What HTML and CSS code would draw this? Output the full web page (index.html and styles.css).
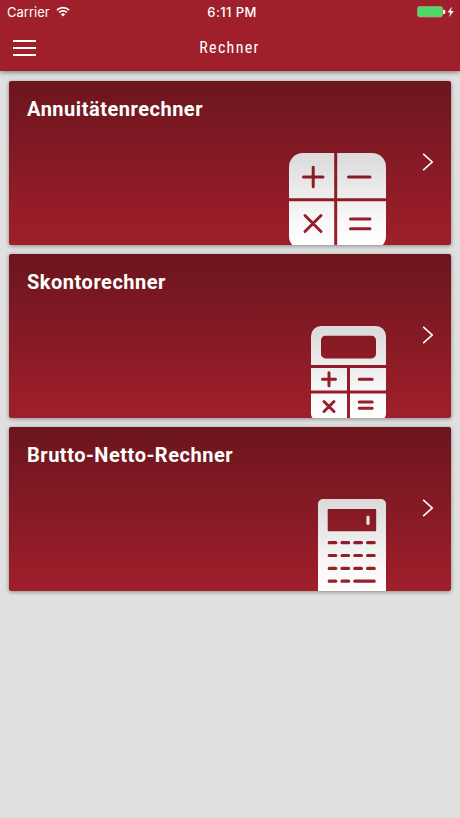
FILE: index.html
```html
<!DOCTYPE html>
<html lang="de">
<head>
    <meta charset="UTF-8">
    <title>Rechner</title>
    <link rel="stylesheet" href="styles.css">
</head>
<body>

<header class="header">
    <div class="status-bar">
        <div class="carrier">
            <span>Carrier</span>
            <svg class="wifi" width="14" height="11" viewBox="0 0 14 11">
                <path d="M0.9 4.1a8.6 8.6 0 0 1 12.2 0M3.1 6.4a5.5 5.5 0 0 1 7.8 0" fill="none" stroke="#fff" stroke-width="1.7"/>
                <path d="M7 10.6L4.8 8.3a3.1 3.1 0 0 1 4.4 0z" fill="#fff"/>
            </svg>
        </div>
        <div class="time">6:11 PM</div>
        <div class="battery">
            <svg width="38" height="12" viewBox="0 0 38 12">
                <rect x="0.5" y="0.5" width="25" height="10.4" rx="1.8" fill="#4cd964" stroke="#a99a7c" stroke-width="0.8"/>
                <path d="M26.2 3.6a2.3 2.3 0 0 1 0 4.6z" fill="#fff"/>
                <path d="M35 0.6l-4.4 5.8h2.7l-1.3 4.9 4.7-6.2h-2.8z" fill="#fff"/>
            </svg>
        </div>
    </div>
    <div class="nav-bar">
        <button class="menu" aria-label="Menü"><span></span><span></span><span></span></button>
        <h1>Rechner</h1>
    </div>
</header>

<main class="cards">
    <a class="card" href="#">
        <h2>Annuitätenrechner</h2>
        <svg class="icon" width="97" height="92" viewBox="0 0 97 92">
            <defs>
                <linearGradient id="shade" x1="0" y1="0" x2="0" y2="1">
                    <stop offset="0" stop-color="#dadada"/>
                    <stop offset="0.75" stop-color="#f9f9f9"/>
                    <stop offset="1" stop-color="#fff"/>
                </linearGradient>
                <mask id="cut1">
                    <rect width="97" height="97" rx="14" fill="#fff"/>
                    <g fill="none" stroke="#000" stroke-width="3" stroke-linecap="round">
                        <path d="M46.7 -2V99M-2 46.7H99"/>
                        <path d="M14.5 24H34M24.2 14.2V33.8M59.5 24H81"/>
                        <path d="M16 62.5L32 78.5M32 62.5L16 78.5M61.5 66H81M61.5 75.8H81"/>
                    </g>
                </mask>
            </defs>
            <rect width="97" height="92" fill="url(#shade)" mask="url(#cut1)"/>
        </svg>
        <svg class="arrow" width="12" height="18" viewBox="0 0 12 18">
            <path d="M1.2 0.8L10.2 9L1.2 17.2"/>
        </svg>
    </a>

    <a class="card" href="#">
        <h2>Skontorechner</h2>
        <svg class="icon" width="75" height="92" viewBox="0 0 75 92">
            <mask id="cut2">
                <path d="M10 0H65a10 10 0 0 1 10 10V88a6 6 0 0 1-6 6H6a6 6 0 0 1-6-6V10A10 10 0 0 1 10 0z" fill="#fff"/>
                <rect x="10" y="9.8" width="55" height="22.6" rx="4.5" fill="#000"/>
                <g fill="none" stroke="#000" stroke-width="3">
                    <path d="M-2 40.6H77M-2 66H77M37.5 40V94"/>
                    <g stroke-linecap="round">
                        <path d="M11.5 53.2H24.5M18 46.7V59.7M48.2 53.2H61.2"/>
                        <path d="M13 75.5L23 85.5M23 75.5L13 85.5M48.2 76H61.2M48.2 82.3H61.2"/>
                    </g>
                </g>
            </mask>
            <rect width="75" height="92" fill="url(#shade)" mask="url(#cut2)"/>
        </svg>
        <svg class="arrow" width="12" height="18" viewBox="0 0 12 18">
            <path d="M1.2 0.8L10.2 9L1.2 17.2"/>
        </svg>
    </a>

    <a class="card" href="#">
        <h2>Brutto-Netto-Rechner</h2>
        <svg class="icon" width="68" height="92" viewBox="0 0 68 92">
            <mask id="cut3">
                <rect width="68" height="100" rx="5" fill="#fff"/>
                <rect x="9.7" y="10" width="48.5" height="22.3" rx="0.8" fill="#000"/>
                <path d="M50 18V24.5" stroke="#fff" stroke-width="3.2" stroke-linecap="round"/>
                <path d="M11.2 43.7h6.6m6.2 0h6.6m6.2 0h6.6m6.2 0h6.6
                         M11.2 56.5h6.6m6.2 0h6.6m6.2 0h6.6m6.2 0h6.6
                         M11.2 69.4h6.6m6.2 0h6.6m6.2 0h6.6m6.2 0h6.6
                         M11.2 82.2h6.6m6.2 0h6.6m6.2 0h19.4" fill="none" stroke="#000" stroke-width="3.2" stroke-linecap="round"/>
            </mask>
            <rect width="68" height="92" fill="url(#shade)" mask="url(#cut3)"/>
        </svg>
        <svg class="arrow" width="12" height="18" viewBox="0 0 12 18">
            <path d="M1.2 0.8L10.2 9L1.2 17.2"/>
        </svg>
    </a>
</main>

</body>
</html>
```
FILE: styles.css
```css
body {
    font-family: Roboto, sans-serif;
    background: #e0e0e0;
    margin: 0;
    padding: 0;
    color: white;
}

.header {
    height: 71px;
    background: #9f1f2b;
    box-shadow: 0 1px 5px rgba(0, 0, 0, 0.5);
}

.status-bar {
    display: grid;
    grid-template-columns: 1fr auto 1fr;
    align-items: center;
    height: 24px;
    padding: 0 5px 0 7px;
    box-sizing: border-box;
    font-family: Inter, sans-serif;
    font-size: 13px;
}

.carrier {
    display: flex;
    align-items: center;
    gap: 6px;
}

.wifi {
    margin-bottom: 2px;
}

.time {
    padding-left: 2px;
    font-weight: 550;
    letter-spacing: 0.4px;
}

.battery {
    display: flex;
    justify-content: flex-end;
}

.nav-bar {
    display: grid;
    grid-template-columns: 1fr auto 1fr;
    align-items: center;
    height: 47px;
    padding: 0 14px 0 13px;
}

.menu {
    display: flex;
    flex-direction: column;
    gap: 5px;
    width: 23px;
    padding: 1px 0 0;
    border: none;
    background: none;
    cursor: pointer;
}

.menu span {
    width: 23px;
    height: 2px;
    background: white;
}

h1 {
    margin: 0;
    font-family: "Roboto Condensed", Roboto, sans-serif;
    font-stretch: 75%;
    font-size: 16px;
    font-weight: 400;
    letter-spacing: 1.3px;
}

.cards {
    display: flex;
    flex-direction: column;
    gap: 9.2px;
    padding: 9.6px 9px;
}

.card {
    display: flex;
    align-items: flex-end;
    height: 164px;
    padding: 0 17px 0 18px;
    box-sizing: border-box;
    border-radius: 2px;
    background: linear-gradient(#6c151d, #9f1f2b);
    box-shadow: 0 1px 4px rgba(0, 0, 0, 0.4);
    color: white;
    text-decoration: none;
}

h2 {
    flex: 1;
    align-self: flex-start;
    margin: 16px 0 0;
    font-size: 20px;
    line-height: 24px;
    font-weight: 700;
    letter-spacing: 0.52px;
}

.icon {
    display: block;
}

.arrow {
    align-self: center;
    margin: 0 0 2px 36px;
    fill: none;
    stroke: white;
    stroke-width: 1.6;
}
```
